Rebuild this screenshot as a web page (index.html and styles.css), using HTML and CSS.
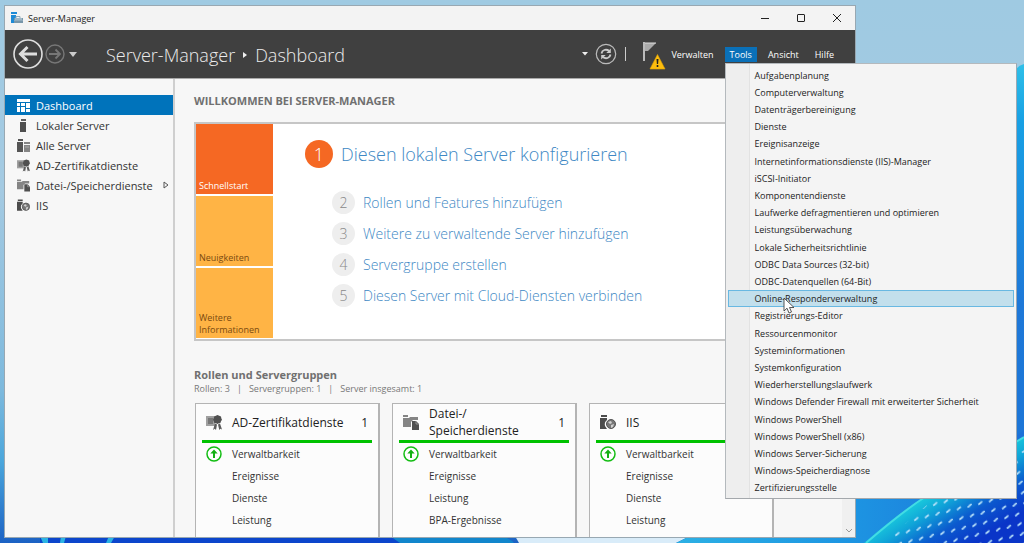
FILE: index.html
```html
<!DOCTYPE html>
<html lang="de">
<head>
<meta charset="utf-8">
<title>Server-Manager</title>
<link rel="stylesheet" href="styles.css">
</head>
<body>
<svg class="wallpaper" viewBox="0 0 1024 543" preserveAspectRatio="none" aria-hidden="true">
  <defs>
    <linearGradient id="sky" x1="0" y1="0" x2="0" y2="1">
      <stop offset="0" stop-color="#9fcae2"/><stop offset=".35" stop-color="#a4cae2"/><stop offset=".72" stop-color="#7db9dd"/><stop offset=".85" stop-color="#4aa6dc"/><stop offset="1" stop-color="#1c62c4"/>
    </linearGradient>
    <linearGradient id="petal" x1="0" y1="0" x2="0" y2="1">
      <stop offset="0" stop-color="#2fbfe8"/><stop offset=".12" stop-color="#18a0e4"/><stop offset=".5" stop-color="#1e78d8"/><stop offset="1" stop-color="#1b74d6"/>
    </linearGradient>
    <linearGradient id="lower" x1="0" y1="0" x2="1" y2="0">
      <stop offset="0" stop-color="#2cb0e4"/><stop offset=".5" stop-color="#1d95e2"/><stop offset="1" stop-color="#1c70d8"/>
    </linearGradient>
    <linearGradient id="deep" gradientUnits="userSpaceOnUse" x1="925" y1="497" x2="960" y2="552">
      <stop offset="0" stop-color="#19c8dc"/><stop offset=".25" stop-color="#10a4d8"/><stop offset=".6" stop-color="#0b5ace"/><stop offset="1" stop-color="#0a35c8"/>
    </linearGradient>
    <pattern id="dots" width="11" height="10" patternUnits="userSpaceOnUse" patternTransform="rotate(-14)">
      <path d="M3 6l3-1.500" stroke="#b8e2fa" stroke-width="1.900" stroke-linecap="round"/>
    </pattern>
  </defs>
  <rect width="1024" height="543" fill="url(#sky)"/>
  <path d="M1012 76Q1016 66 1024 64V543H1012Z" fill="url(#petal)"/>
  <path d="M40 536H330Q450 536 515 543H40Z" fill="#0c46cc"/>
  <path d="M40 536H48V543H43ZM61 536H66L64 543H60ZM109 536H115L111 543H106Z" fill="#2cb4e4"/>
  <path d="M390 536H500Q510 538 514 543H400Z" fill="#1186cc"/>
  <path d="M515 536H690L676 543H519Z" fill="#d9ecf9"/>
  <path d="M690 536L676 543H872L1024 430V490H840V536Z" fill="url(#lower)"/>
  <path d="M864 543Q900 512 925 497L1024 437V543Z" fill="url(#deep)"/>
  <path d="M884 543Q912 517 938 496L1024 450V543Z" fill="url(#dots)"/>
  <path d="M866 543Q902 512 925 497L1024 437" fill="none" stroke="#42dce4" stroke-width="2"/>
</svg>

<svg class="symbols" aria-hidden="true">
  <symbol id="i-dashboard" viewBox="0 0 13 13"><path d="M0 0h13v3H0zM0 4h3v3H0zM4 4h4v3H4zM9 4h4v5H9zM0 8h3v5H0zM4 8h4v5H4zM9 10h4v3H9z" fill="currentColor"/></symbol>
  <symbol id="i-server" viewBox="0 0 13 13"><path d="M4 0h5v2H4zM3 3h6v10H3z" fill="#4f4f4f"/><path d="M4 1h5" stroke="#888" stroke-width=".6"/></symbol>
  <symbol id="i-servers" viewBox="0 0 13 13"><path d="M1 0h5v2H1zM0 3h6v10H0z" fill="#555"/><path d="M7 3h6v2H7zM7 6h6v7H7z" fill="#858585"/><path d="M8 8h4" stroke="#bbb" stroke-width=".7"/></symbol>
  <symbol id="i-cert" viewBox="0 0 16 15"><path d="M0 1h9v10H0z" fill="#a0a0a0"/><path d="M2 3h5v6H2z" fill="#777"/><path d="M11.500 0l1.700.8 1.800.6.300 1.800.7 1.500-1 1.600-.6 1.600-1.600.4-1.300.7-1.500-.7-1.700-.4-.5-1.700-.8-1.500.8-1.600.4-1.700 1.700-.6z" fill="#505050"/><path d="M9 8.500l2 1-1 5.500-1.300-1.200L7 15zM12 9.500l2-1 2 6-1.600-.8L13.300 15z" fill="#5c5c5c"/></symbol>
  <symbol id="i-files" viewBox="0 0 16 15"><path d="M0 0h5v2H0zM0 3h6l1-1h8v3h-5L8 7v5H0z" fill="#858585"/><path d="M9 6h4l3 3v6H9z" fill="#505050"/><path d="M13 6v3h3" stroke="#aaa" stroke-width=".7" fill="none"/></symbol>
  <symbol id="i-iis" viewBox="0 0 16 15"><path d="M1 0h6v2H1zM0 3h7v2Q4 7 5 11l2 3H0z" fill="#4c4c4c"/><circle cx="11" cy="9" r="4.500" fill="#777" stroke="#555"/><path d="M8 7l3-1 1 2-2 1zM11 10l3-1-1 3-2 1zM13 6l1.500 1.500" fill="#d0d0d0"/></symbol>
  <symbol id="i-up" viewBox="0 0 16 16"><circle cx="8" cy="8" r="7" fill="#fff" stroke="#13bd13" stroke-width="1.500"/><path d="M8 3.600L11.700 7.500H9V12H7V7.500H4.300Z" fill="#13b013"/></symbol>
</svg>

<div class="window">
  <header class="titlebar">
    <svg class="app-icon" viewBox="0 0 12 12"><path d="M0 0h6v2H0zM0 3h5v3H3v5H0z" fill="#1d8ad6"/><path d="M3 6h9v5H3z" fill="#7796aa"/><path d="M5 6V4.500h4V6M3 8.500h9" fill="none" stroke="#8fabbd"/><path d="M4 7h7" stroke="#c8d8e2"/></svg>
    <span class="app-name">Server-Manager</span>
    <button class="caption" aria-label="Minimieren"><svg viewBox="0 0 10 10"><path d="M1 5.500h8"/></svg></button>
    <button class="caption" aria-label="Maximieren"><svg viewBox="0 0 10 10"><rect x="1.500" y="1.500" width="7" height="7" rx=".5"/></svg></button>
    <button class="caption" aria-label="Schließen"><svg viewBox="0 0 10 10"><path d="M1 1l8 8M9 1L1 9"/></svg></button>
  </header>

  <div class="toolbar">
    <button class="nav-back" aria-label="Zurück"><svg viewBox="0 0 30 30"><circle cx="15" cy="15" r="14" fill="none" stroke="#dedede" stroke-width="1.600"/><path d="M24 15H8M14.500 8L7.500 15l7 7" fill="none" stroke="#dedede" stroke-width="3"/></svg></button>
    <button class="nav-next" aria-label="Vorwärts"><svg viewBox="0 0 20 20"><circle cx="10" cy="10" r="9" fill="none" stroke="#777" stroke-width="1.400"/><path d="M4 10h11M10.500 5.500L15 10l-4.500 4.500" fill="none" stroke="#777" stroke-width="1.800"/></svg></button>
    <button class="nav-more" aria-label="Verlauf"><svg viewBox="0 0 8 5"><path d="M0 0h8L4 5z" fill="#ccc"/></svg></button>
    <h1 class="crumbs"><span>Server-Manager</span><svg viewBox="0 0 4 6"><path d="M0 0l4 3-4 3z" fill="#f0f0f0"/></svg><span>Dashboard</span></h1>
    <button class="drop" aria-label="Optionen"><svg viewBox="0 0 6 4"><path d="M0 0h6L3 3.500z" fill="#eee"/></svg></button>
    <button class="refresh" aria-label="Aktualisieren"><svg viewBox="0 0 22 22"><circle cx="11" cy="11" r="9.700" fill="none" stroke="#bbb" stroke-width="1.200"/><path d="M6.500 10.500C7 7 11 5.500 14.300 8M15.500 11.500C15 15 11 16.500 7.700 14" fill="none" stroke="#ccc" stroke-width="1.800"/><path d="M15.800 5.500v4.500h-4.500zM6.200 16.500V12h4.500z" fill="#ccc"/></svg></button>
    <span class="divider"></span>
    <button class="flag" aria-label="Benachrichtigungen"><svg viewBox="0 0 24 28"><path d="M1 0h2v19H1z" fill="#bbb"/><path d="M3 1h11L6 9H3z" fill="#aaa"/><path d="M3 1h11" stroke="#ddd"/><path d="M15.500 12.500L23 27H8z" fill="#fdbd0e" stroke="#e8a800" stroke-width=".6" stroke-linejoin="round"/><path d="M14.500 17h2l-.4 5h-1.200zM14.700 23h1.600v2h-1.600z" fill="#222"/></svg></button>
    <nav class="menubar">
      <button>Verwalten</button>
      <div class="menu-host">
        <button class="open" aria-expanded="true">Tools</button>
        <div class="menu" role="menu">
          <button role="menuitem">Aufgabenplanung</button>
          <button role="menuitem">Computerverwaltung</button>
          <button role="menuitem">Datenträgerbereinigung</button>
          <button role="menuitem">Dienste</button>
          <button role="menuitem">Ereignisanzeige</button>
          <button role="menuitem">Internetinformationsdienste (IIS)-Manager</button>
          <button role="menuitem">iSCSI-Initiator</button>
          <button role="menuitem">Komponentendienste</button>
          <button role="menuitem">Laufwerke defragmentieren und optimieren</button>
          <button role="menuitem">Leistungsüberwachung</button>
          <button role="menuitem">Lokale Sicherheitsrichtlinie</button>
          <button role="menuitem">ODBC Data Sources (32-bit)</button>
          <button role="menuitem">ODBC-Datenquellen (64-Bit)</button>
          <button role="menuitem" class="hot">Online-Responderverwaltung<svg class="cursor" viewBox="0 0 12 18"><path d="M1 1v13l3-2.800L6 16l2.500-1L6.500 10.500H11z" fill="#fff" stroke="#444" stroke-width=".9"/></svg></button>
          <button role="menuitem">Registrierungs-Editor</button>
          <button role="menuitem">Ressourcenmonitor</button>
          <button role="menuitem">Systeminformationen</button>
          <button role="menuitem">Systemkonfiguration</button>
          <button role="menuitem">Wiederherstellungslaufwerk</button>
          <button role="menuitem">Windows Defender Firewall mit erweiterter Sicherheit</button>
          <button role="menuitem">Windows PowerShell</button>
          <button role="menuitem">Windows PowerShell (x86)</button>
          <button role="menuitem">Windows Server-Sicherung</button>
          <button role="menuitem">Windows-Speicherdiagnose</button>
          <button role="menuitem">Zertifizierungsstelle</button>
        </div>
      </div>
      <button>Ansicht</button>
      <button>Hilfe</button>
    </nav>
  </div>

  <div class="body">
    <nav class="sidebar">
      <a href="#" class="active"><svg><use href="#i-dashboard"/></svg>Dashboard</a>
      <a href="#"><svg><use href="#i-server"/></svg>Lokaler Server</a>
      <a href="#"><svg><use href="#i-servers"/></svg>Alle Server</a>
      <a href="#"><svg><use href="#i-cert"/></svg>AD-Zertifikatdienste</a>
      <a href="#"><svg><use href="#i-files"/></svg>Datei-/Speicherdienste<svg class="expand" viewBox="0 0 6 8"><path d="M1 1l4 3-4 3z" fill="none" stroke="#555"/></svg></a>
      <a href="#"><svg><use href="#i-iis"/></svg>IIS</a>
    </nav>

    <main class="content">
      <h2 class="welcome">WILLKOMMEN BEI SERVER-MANAGER</h2>
      <section class="panel">
        <div class="tiles">
          <button class="selected">Schnellstart</button>
          <button>Neuigkeiten</button>
          <button>Weitere Informationen</button>
        </div>
        <div class="steps">
          <a href="#" class="step first"><span class="num">1</span>Diesen lokalen Server konfigurieren</a>
          <a href="#" class="step"><span class="num">2</span>Rollen und Features hinzufügen</a>
          <a href="#" class="step"><span class="num">3</span>Weitere zu verwaltende Server hinzufügen</a>
          <a href="#" class="step"><span class="num">4</span>Servergruppe erstellen</a>
          <a href="#" class="step"><span class="num">5</span>Diesen Server mit Cloud-Diensten verbinden</a>
        </div>
      </section>

      <h2 class="groups-title">Rollen und Servergruppen</h2>
      <p class="summary"><span>Rollen: 3</span><span>|</span><span>Servergruppen: 1</span><span>|</span><span>Server insgesamt: 1</span></p>
      <div class="cards">
        <article class="card">
          <header><svg><use href="#i-cert"/></svg><h3>AD-Zertifikatdienste</h3><span>1</span></header>
          <ul><li><svg><use href="#i-up"/></svg>Verwaltbarkeit</li><li>Ereignisse</li><li>Dienste</li><li>Leistung</li></ul>
        </article>
        <article class="card">
          <header><svg><use href="#i-files"/></svg><h3>Datei-/<br>Speicherdienste</h3><span>1</span></header>
          <ul><li><svg><use href="#i-up"/></svg>Verwaltbarkeit</li><li>Ereignisse</li><li>Leistung</li><li>BPA-Ergebnisse</li></ul>
        </article>
        <article class="card">
          <header><svg><use href="#i-iis"/></svg><h3>IIS</h3></header>
          <ul><li><svg><use href="#i-up"/></svg>Verwaltbarkeit</li><li>Ereignisse</li><li>Dienste</li><li>Leistung</li></ul>
        </article>
      </div>
    </main>
    <div class="scrollbar"><svg viewBox="0 0 8 5"><path d="M1 1l3 3 3-3" fill="none" stroke="#999"/></svg></div>
  </div>
</div>
</body>
</html>
```

FILE: styles.css
```css
* { box-sizing: border-box; }

body {
  margin: 0;
  height: 100vh;
  padding: 5px 168px 5px 4px;
  overflow: hidden;
  font-family: "Open Sans", "Noto Sans", sans-serif;
  font-size: 10px;
  color: #333;
}

button {
  margin: 0;
  padding: 0;
  border: 0;
  background: none;
  font: inherit;
  color: inherit;
}

a { color: inherit; text-decoration: none; }
h1, h2, h3, p, ul { margin: 0; padding: 0; font-weight: 400; list-style: none; }
svg { display: block; flex: none; }

.symbols { position: absolute; width: 0; height: 0; }

.wallpaper {
  position: absolute;
  inset: 0;
  z-index: -1;
  width: 100%;
  height: 100%;
}

.window {
  display: flex;
  flex-direction: column;
  height: 100%;
  border: 1px solid #98a8b2;
  background: #f7f7f7;
}

/* Title bar */
.titlebar {
  display: flex;
  align-items: center;
  height: 24px;
  padding-left: 6px;
  background: #f3f3f3;
  color: #222;
}
.app-icon { width: 12px; height: 12px; }
.app-name { flex: 1; padding-left: 5px; font-size: 9px; }
.caption { display: grid; place-items: center; width: 36px; height: 24px; }
.caption svg { width: 10px; height: 10px; fill: none; stroke: #222; }

/* Toolbar */
.toolbar {
  display: flex;
  align-items: center;
  height: 49px;
  padding: 0 16px 0 8px;
  border-bottom: 1px solid #aaa;
  background: #404040;
  color: #fff;
}
.nav-back svg { width: 30px; height: 30px; }
.nav-next { margin-left: 2px; }
.nav-next svg { width: 20px; height: 20px; }
.nav-more { margin-left: 4px; }
.nav-more svg { width: 8px; height: 5px; }
.crumbs {
  display: flex;
  flex: 1;
  align-items: center;
  gap: 8px;
  padding: 2px 0 0 29px;
  font-size: 18px;
  font-weight: 300;
  color: #ececec;
  white-space: nowrap;
}
.crumbs svg { width: 4px; height: 6px; }
.drop svg { width: 6px; height: 4px; }
.refresh { margin-left: 7px; }
.refresh svg { width: 22px; height: 22px; }
.divider { width: 1px; height: 14px; margin-left: 8px; background: #ccc; }
.flag { margin: 4px 0 0 16px; }
.flag svg { width: 24px; height: 28px; }

.menubar { display: flex; gap: 6px; font-size: 9px; }
.menubar > button, .open { height: 15px; padding: 0 5px; line-height: 15px; }
.menu-host { position: relative; height: 15px; }
.open { display: block; background: #0a70b8; }

.menu {
  position: absolute;
  top: 16px;
  left: 0;
  z-index: 2;
  display: flex;
  flex-direction: column;
  width: 292px;
  height: 436px;
  padding: 3px 2px 1px;
  border: 1px solid #b4b9bd;
  border-right-color: #9aa8b4;
  border-bottom-color: #a4a8ac;
  background: linear-gradient(to right, #eeeeee 23px, #e2e2e2 23px, #e2e2e2 24px, #f4f4f4 24px);
  color: #222;
}
.menu button {
  flex: 1;
  display: flex;
  align-items: center;
  padding-left: 26px;
  border: 1px solid transparent;
  text-align: left;
  white-space: nowrap;
}
.menu .hot { position: relative; border-color: #68b8e2; background: #c2dfec; }
.cursor { position: absolute; left: 54px; top: 6px; z-index: 1; width: 12px; height: 18px; }

/* Body */
.body { display: flex; flex: 1; min-height: 0; }

.sidebar {
  display: flex;
  flex-direction: column;
  width: 170px;
  padding-top: 16px;
  border-right: 2px solid #cfcfcf;
  font-size: 11px;
}
.sidebar a {
  display: flex;
  align-items: center;
  gap: 6px;
  height: 20px;
  padding: 0 4px 0 12px;
  white-space: nowrap;
}
.sidebar a.active { background: #0073bb; color: #fff; }
.sidebar a > svg { width: 13px; height: 13px; }
.sidebar a > .expand { width: 6px; height: 8px; margin-left: auto; }

.content { flex: 1; min-width: 0; overflow: hidden; padding: 14px 0 0 19px; }
.welcome { font-size: 11px; line-height: 15px; font-weight: 700; color: #707070; }

.panel {
  display: flex;
  margin: 14px 14px 0 0;
  padding-bottom: 1px;
  border: 2px solid #c6c6c6;
  background: #fff;
}
.tiles { display: flex; flex-direction: column; gap: 2px; width: 77px; }
.tiles button {
  display: flex;
  align-items: flex-end;
  height: 70px;
  padding: 0 3px 2px;
  background: #ffb445;
  color: #7a4a10;
  font-size: 9px;
  line-height: 12px;
  text-align: left;
}
.tiles .selected { background: #f56823; color: #fff; }

.steps { display: flex; flex-direction: column; gap: 8px; padding: 16px 0 0 59px; color: #4088c4; }
.step { display: flex; align-items: center; gap: 8px; font-size: 14px; font-weight: 300; line-height: 20px; white-space: nowrap; }
.num { display: grid; place-items: center; width: 23px; height: 23px; border-radius: 50%; background: #eee; color: #888; }
.first { margin: 0 0 15px -27px; font-size: 18px; }
.first .num { width: 28px; height: 28px; background: #f56823; color: #fff; }

.groups-title { margin-top: 26px; font-size: 11px; line-height: 15px; font-weight: 700; color: #707070; }
.summary { display: flex; gap: 7px; font-size: 9px; line-height: 14px; color: #777; }

.cards { display: flex; gap: 12px; padding: 7px 0 0 1px; }
.card {
  flex: none;
  width: 185px;
  height: 190px;
  padding: 0 6px;
  border: 1px solid #b4b4b4;
  border-right-width: 2px;
  background: #fcfcfc;
}
.card header {
  display: flex;
  align-items: center;
  height: 39px;
  padding: 0 4px;
  border-bottom: 3px solid #00c200;
  color: #222;
}
.card header svg { width: 16px; height: 15px; }
.card h3 { flex: 1; padding-left: 10px; font-size: 12px; line-height: 17px; }
.card header span { font-size: 12px; }
.card li { display: flex; align-items: center; height: 22px; padding-left: 30px; }
.card li svg { width: 16px; height: 16px; margin: 0 10px 0 -26px; }

.scrollbar {
  display: flex;
  align-items: flex-end;
  justify-content: center;
  width: 13px;
  padding-bottom: 4px;
  background: #f0f0f0;
}
.scrollbar svg { width: 8px; height: 5px; }
```
